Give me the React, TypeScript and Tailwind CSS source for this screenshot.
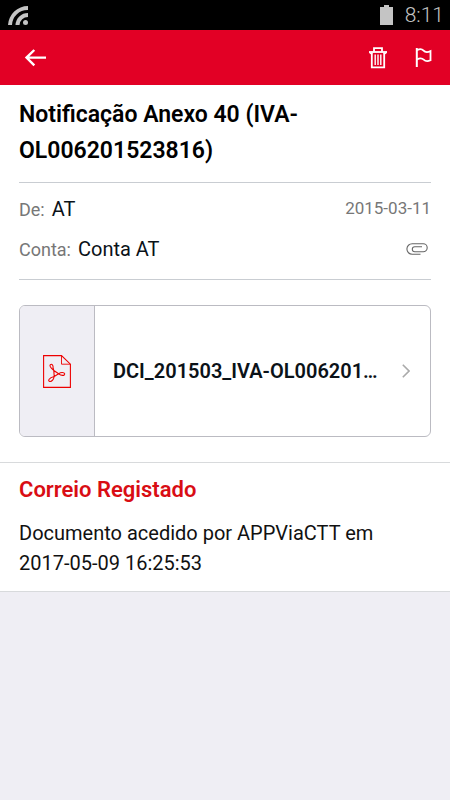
import type { ReactNode } from 'react';

const message = {
	subject: 'Notificação Anexo 40 (IVA-OL006201523816)',
	from: 'AT',
	account: 'Conta AT',
	date: '2015-03-11',
	attachment: 'DCI_201503_IVA-OL006201…',
	receiptTitle: 'Correio Registado',
	receipt: 'Documento acedido por APPViaCTT em',
	receiptDate: '2017-05-09 16:25:53',
};

const StatusBar = () => (
	<div className="flex h-[30px] items-center justify-between bg-black pl-2 pr-[6px] text-[#c4c4c4]">
		<svg className="h-5 w-5" viewBox="0 0 20 20" fill="currentColor">
			<path d="M0 20A20 20 0 0 1 20 1v4A15.500 15.500 0 0 0 4 20z" />
			<path d="M7.500 20A12.500 12.500 0 0 1 20 8v4A8.500 8.500 0 0 0 11.500 20z" />
			<circle cx="17.500" cy="17.500" r="2.500" />
		</svg>
		<div className="flex items-center gap-3">
			<svg className="h-5 w-[13px]" viewBox="0 0 13 20" fill="currentColor">
				<path d="M4 0h5v2h4v18H0V2h4z" />
			</svg>
			<span className="text-[21px] font-light leading-[30px]">8:11</span>
		</div>
	</div>
);

const TrashIcon = () => (
	<svg className="h-[22px] w-[18px]" viewBox="0 0 18 22" fill="none" stroke="currentColor" strokeWidth="1.800">
		<path d="M5 4.800V1.200h8v3.600" />
		<path d="M0 5h18" />
		<path d="M1 5v1.600h2V5M15 5v1.600h2V5" strokeWidth="1" />
		<path d="M2.800 6v14.400h12.400V6" />
		<path d="M6.200 7.500v10.500M9 7.500v10.500M11.800 7.500v10.500" strokeWidth="1.400" />
	</svg>
);

const FlagIcon = () => (
	<svg className="h-5 w-[17px]" viewBox="0 0 17 20" fill="none" stroke="currentColor" strokeWidth="1.800">
		<path d="M1.800 0v19" strokeWidth="2" />
		<path d="M2 2.200C4.500.8 7 .9 8.300 2.400c1.500 1.700 4.500 2 7.200.7v9.200c-2.600 1.200-5.200 1-6.800-.6-1.600-1.500-4.200-1.600-6.700-.2" />
	</svg>
);

const ClipIcon = () => (
	<svg className="h-3 w-[22px] text-[#666]" viewBox="0 0 22 12" fill="none" stroke="currentColor" strokeWidth="1.100">
		<path d="M14.500 11.300H6.200a5.300 5.300 0 0 1 0-10.600h11a4 4 0 0 1 0 8H8.800a2.500 2.500 0 0 1 0-5h7.200" />
	</svg>
);

const PdfIcon = () => (
	<svg className="h-[33px] w-7" viewBox="0 0 28 33" fill="none" stroke="#ed0000" strokeWidth="1.100">
		<path d="M18.500.6H.6v31.800h26.800V9.200z" />
		<path d="M18.500.6v8.600h8.900" strokeWidth="0.900" />
		<path d="M10.800 15.500C8.600 13.500 6 11.200 7.200 9.800c1.600-1.500 3.300.5 2.800 2.700zM10.800 15.500l.4 6M10.800 15.500l4.900 3.300-4.500 2.700" />
		<path d="M15.700 18.800c2-1.700 5.600-1.600 6 .1.100 1.700-3.200 2.300-6-.1z" />
		<path d="M11.200 21.500c-.5 2.700-2.300 5.500-4.500 5-2.200-.8-.8-3.600 4.500-5z" />
	</svg>
);

const Field = ({ label, value, children }: { label: string; value: string; children: ReactNode }) => (
	<div className="flex h-10 items-center justify-between">
		<p className="text-xl">
			<span className="mr-[7px] text-lg text-[#777]">{label}:</span>
			{value}
		</p>
		{children}
	</div>
);

const App = () => {
	return (
		<div className="min-h-screen bg-[#efeef4] font-[Roboto,sans-serif] text-[#0b1218]">
			<StatusBar />
			<header className="flex h-[55px] items-center justify-between bg-[#e20025] pl-6 pr-[18px] text-white">
				<button type="button" aria-label="Voltar">
					<svg className="h-[18px] w-[22px]" viewBox="0 0 22 18" fill="none" stroke="currentColor" strokeWidth="2.400">
						<path d="M10.300 1 2.500 8.600l7.800 7.800M2.500 8.600H22" />
					</svg>
				</button>
				<div className="flex items-center gap-7">
					<button type="button" aria-label="Eliminar"><TrashIcon /></button>
					<button type="button" aria-label="Marcar"><FlagIcon /></button>
				</div>
			</header>

			<main className="bg-white">
				<section className="px-[19px] pb-[25px] pt-3">
					<h1 className="pb-[13px] text-[23px] font-semibold leading-9 text-black">{message.subject}</h1>
					<div className="border-y border-[#c9cdd2] pb-[10px] pt-[6px]">
						<Field label="De" value={message.from}>
							<time className="text-[17px] text-[#777]">{message.date}</time>
						</Field>
						<Field label="Conta" value={message.account}>
							<span className="mr-[3px]"><ClipIcon /></span>
						</Field>
					</div>

					<button type="button" className="mt-[25px] flex h-[132px] w-full overflow-hidden rounded-md border border-[#bbbbc2] text-left">
						<span className="flex h-full w-[75px] shrink-0 items-center justify-center border-r border-[#bbbbc2] bg-[#efeef4]">
							<PdfIcon />
						</span>
						<span className="flex h-full flex-1 items-center justify-between pl-[18px] pr-5">
							<span className="text-xl font-semibold">{message.attachment}</span>
							<svg className="h-[14px] w-2 shrink-0" viewBox="0 0 8 14" fill="none" stroke="#aaa" strokeWidth="1.600">
								<path d="m.8.8 6.200 6.200-6.200 6.200" />
							</svg>
						</span>
					</button>
				</section>

				<section className="border-y border-[#d8dadc] px-[19px] pb-[13px] pt-3">
					<h2 className="mb-[13px] text-[22px] font-semibold leading-[30px] text-[#d90d14]">{message.receiptTitle}</h2>
					<p className="text-xl leading-[30px] text-[#111]">
						{message.receipt} <time className="whitespace-nowrap">{message.receiptDate}</time>
					</p>
				</section>
			</main>
		</div>
	);
};

export default App;
